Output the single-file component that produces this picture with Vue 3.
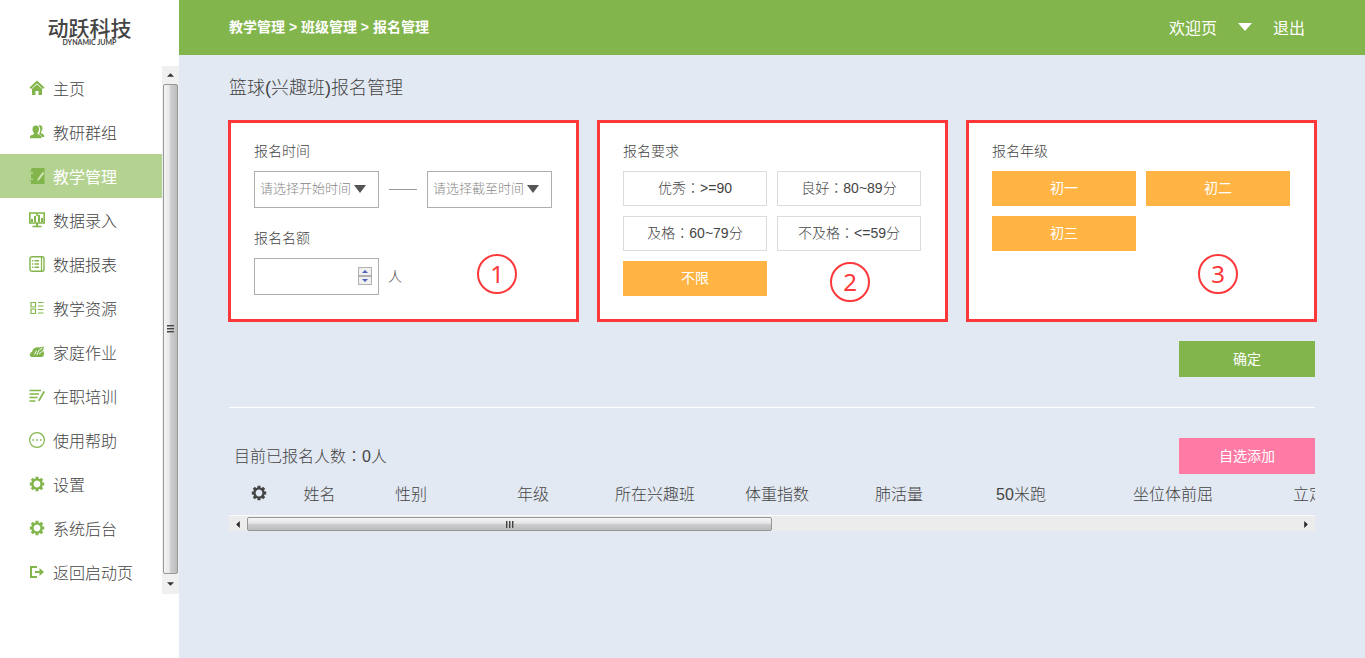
<script setup>
import { ref } from 'vue'

const menu = [
  { name: '主页', icon: 'home' },
  { name: '教研群组', icon: 'group' },
  { name: '教学管理', icon: 'notebook', active: true },
  { name: '数据录入', icon: 'monitor' },
  { name: '数据报表', icon: 'report' },
  { name: '教学资源', icon: 'resource' },
  { name: '家庭作业', icon: 'cloud' },
  { name: '在职培训', icon: 'training' },
  { name: '使用帮助', icon: 'help' },
  { name: '设置', icon: 'gear' },
  { name: '系统后台', icon: 'gear' },
  { name: '返回启动页', icon: 'exit' },
]

const levels = ref([
  { name: '优秀', range: '>=90', on: false },
  { name: '良好', range: '80~89分', on: false },
  { name: '及格', range: '60~79分', on: false },
  { name: '不及格', range: '<=59分', on: false },
  { name: '不限', range: '', on: true },
])

const grades = ref([
  { name: '初一', on: true },
  { name: '初二', on: true },
  { name: '初三', on: true },
])

const columns = [
  { name: '姓名', size: 'narrow' },
  { name: '性别', size: 'normal' },
  { name: '年级', size: 'normal' },
  { name: '所在兴趣班', size: 'normal' },
  { name: '体重指数', size: 'normal' },
  { name: '肺活量', size: 'normal' },
  { name: '50米跑', size: 'normal' },
  { name: '坐位体前屈', size: 'wide' },
  { name: '立定跳远', size: 'normal' },
]

const quota = ref('')
function step(n) {
  quota.value = Math.max(0, Number(quota.value || 0) + n)
}
</script>

<template>
  <div class="page">
    <svg class="defs" aria-hidden="true">
      <symbol id="i-gear" viewBox="0 0 16 16">
        <path fill="none" stroke="currentColor" stroke-width="2.4" d="M8 3.400a4.600 4.600 0 1 1 0 9.200a4.600 4.600 0 1 1 0-9.200z" />
        <path stroke="currentColor" stroke-width="3" d="M8 .8v2.400M8 12.800v2.400M.8 8h2.400M12.800 8h2.400M2.800 2.800l1.800 1.800M11.400 11.400l1.800 1.800M2.800 13.200l1.800-1.800M11.400 4.600l1.800-1.800" />
      </symbol>
      <symbol id="i-home" viewBox="0 0 16 16">
        <path fill="none" stroke="currentColor" stroke-width="2.200" d="M1.200 8.200L8 2l6.800 6.200" />
        <path fill="currentColor" d="M3 8.800L8 4.500l5 4.300V15H9.500v-4h-3v4H3z" />
      </symbol>
      <symbol id="i-group" viewBox="0 0 16 16">
        <path fill="currentColor" d="M9.500 1.500c3-.8 4.600 1.400 3.800 4.300-.3 1-.8 1.700-1.300 2.200l.2 1.200 2.500 1.500c.5.500.6 1.500.5 2.300h-2.400c-.3-1.500-1.300-2-2.900-2.900 1.900-2.500 2-6.400-.4-8.600z" />
        <path fill="currentColor" d="M6.800 1.500c2.300 0 3.400 1.700 3.200 3.900-.1 1.600-.7 2.700-1.500 3.500v1c1.500.8 3.500 1.200 3.900 2.500.2.700.1 1.300 0 1.900H1c-.1-.8-.2-1.400.1-2 .5-1.200 2.600-1.500 3.900-2.300V9C4.200 8.200 3.600 7 3.500 5.400 3.400 3.100 4.600 1.500 6.800 1.500z" />
      </symbol>
      <symbol id="i-notebook" viewBox="0 0 16 16">
        <path fill="currentColor" d="M3 0h12.500v16H2v-3H.5v-1.500H4v-1H2V6h2V5H.5V3.500H2V1z" />
        <path class="cut" d="M0 4.300h4M0 11.700h4" />
        <path class="pen" d="M14.500 4.500L9 12" />
        <path class="cut" d="M9.500 11l-1 2.500" />
      </symbol>
      <symbol id="i-monitor" viewBox="0 0 16 16">
        <path fill="none" stroke="currentColor" stroke-width="1.600" d="M.8 1h14.400v10H.8zM8 1v3" />
        <path stroke="currentColor" stroke-width="2" d="M3 10V7M6 10V4M10 10V3M13 10V6M8 11v3" />
        <path stroke="currentColor" stroke-width="1.600" d="M3.500 14.500h9" />
      </symbol>
      <symbol id="i-report" viewBox="0 0 16 16">
        <rect x="1" y=".7" width="14" height="14.600" rx="2" fill="none" stroke="currentColor" stroke-width="1.400" />
        <path stroke="currentColor" stroke-width="1.200" d="M12.500 1v14" />
        <path stroke="currentColor" stroke-width="1.600" d="M3 4.800h1.300M5.500 4.800H10M3 8h1.300M5.500 8H10M3 11.200h1.300M5.500 11.200H10" />
      </symbol>
      <symbol id="i-resource" viewBox="0 0 16 16">
        <path fill="none" stroke="currentColor" stroke-width="1.200" d="M2 2.500h4.500v4.500H2zM2 9h4.500v4.500H2zM9 2.500h5.500M9 6h5.500M9 9.500h5.500M9 13h5.500" />
      </symbol>
      <symbol id="i-cloud" viewBox="0 0 16 16">
        <path fill="currentColor" d="M3.600 13C-.2 13 .2 8.500 3 8c.6-3.400 4-5.500 7.400-4.500L15 2.500 14 6.500c1.500 2 1.500 6.500-1.500 6.500z" />
        <path class="white" d="M5.500 10.500l2-4M8 10.800c.5-3 2.500-5.300 5.200-6.800M10 9.500c1.500-.3 3-1.500 3.500-3" />
      </symbol>
      <symbol id="i-training" viewBox="0 0 16 16">
        <path stroke="currentColor" stroke-width="1.600" d="M.5 2.500H12M.5 6H10M.5 9.500h8M.5 13h6" />
        <path fill="currentColor" d="M14.500 3l1.500.7-4.800 8.500-2 1.500.5-2.500z" />
      </symbol>
      <symbol id="i-help" viewBox="0 0 16 16">
        <circle cx="8" cy="8" r="7.400" fill="none" stroke="currentColor" stroke-width="1.200" />
        <path stroke="currentColor" stroke-width="1.600" d="M3.500 8H5M7.200 8h1.600M11 8h1.500" />
      </symbol>
      <symbol id="i-exit" viewBox="0 0 16 16">
        <path fill="none" stroke="currentColor" stroke-width="2" d="M8 3H2v10h6" />
        <path fill="currentColor" d="M6 7h4.500V4L15 8l-4.500 4V9H6z" />
      </symbol>
    </svg>

    <aside class="sidebar">
      <div class="logo">
        <span class="logo-name">动跃科技</span>
        <span class="logo-sub">DYNAMIC JUMP</span>
      </div>
      <div class="side-body">
        <nav class="menu">
          <a v-for="m in menu" :key="m.name" href="#" class="item" :class="{ active: m.active }">
            <svg class="icon" aria-hidden="true"><use :href="'#i-' + m.icon" /></svg>
            <span>{{ m.name }}</span>
          </a>
        </nav>
        <div class="vbar" aria-hidden="true">
          <span class="vend"><svg viewBox="0 0 8 4"><path d="M0 4l4-4 4 4z" /></svg></span>
          <span class="vthumb"><i></i><i></i><i></i></span>
          <span class="vend"><svg viewBox="0 0 8 4"><path d="M0 0l4 4 4-4z" /></svg></span>
        </div>
      </div>
    </aside>

    <div class="main">
      <header class="top">
        <nav class="crumbs">
          <a href="#">教学管理</a> &gt; <a href="#">班级管理</a> &gt; <a href="#">报名管理</a>
        </nav>
        <div class="user">
          <button type="button" class="welcome">
            欢迎页
            <svg viewBox="0 0 14 8" aria-hidden="true"><path d="M0 0h14L7 8z" /></svg>
          </button>
          <a href="#">退出</a>
        </div>
      </header>

      <main class="content">
        <h1>篮球(兴趣班)报名管理</h1>

        <div class="panels">
          <section class="panel">
            <h2>报名时间</h2>
            <div class="range">
              <div class="picker">
                <select aria-label="开始时间"><option>请选择开始时间</option></select>
                <svg viewBox="0 0 12 8" aria-hidden="true"><path d="M0 0h12L6 8z" /></svg>
              </div>
              <span class="dash"></span>
              <div class="picker">
                <select aria-label="截至时间"><option>请选择截至时间</option></select>
                <svg viewBox="0 0 12 8" aria-hidden="true"><path d="M0 0h12L6 8z" /></svg>
              </div>
            </div>
            <h2><label for="quota">报名名额</label></h2>
            <div class="quota">
              <div class="picker">
                <input id="quota" v-model="quota" type="number" min="0" />
                <span class="spin">
                  <button type="button" aria-label="增加" @click="step(1)"><svg viewBox="0 0 6 3"><path d="M0 3l3-3 3 3z" /></svg></button>
                  <button type="button" aria-label="减少" @click="step(-1)"><svg viewBox="0 0 6 3"><path d="M0 0l3 3 3-3z" /></svg></button>
                </span>
              </div>
              <span class="unit">人</span>
            </div>
            <span class="mark first">1</span>
          </section>

          <section class="panel">
            <h2>报名要求</h2>
            <div class="options">
              <button v-for="l in levels" :key="l.name" type="button" class="option" :class="{ on: l.on }" @click="l.on = !l.on">
                {{ l.name }}<template v-if="l.range"><span class="colon">：</span>{{ l.range }}</template>
              </button>
            </div>
            <span class="mark second">2</span>
          </section>

          <section class="panel">
            <h2>报名年级</h2>
            <div class="options">
              <button v-for="g in grades" :key="g.name" type="button" class="option" :class="{ on: g.on }" @click="g.on = !g.on">{{ g.name }}</button>
            </div>
            <span class="mark third">3</span>
          </section>
        </div>

        <div class="confirm">
          <button type="button" class="action">确定</button>
        </div>

        <div class="summary">
          <span>目前已报名人数<span class="colon">：</span>0人</span>
          <button type="button" class="action pink">自选添加</button>
        </div>

        <div class="sheet">
          <table>
            <thead>
              <tr>
                <th class="tool"><svg class="icon" role="img" aria-label="列设置"><use href="#i-gear" /></svg></th>
                <th v-for="c in columns" :key="c.name" :class="c.size">{{ c.name }}</th>
              </tr>
            </thead>
          </table>
        </div>
        <div class="hbar" aria-hidden="true">
          <span class="hend"><svg viewBox="0 0 4 8"><path d="M4 0L0 4l4 4z" /></svg></span>
          <span class="htrack"><span class="hthumb"><i></i><i></i><i></i></span></span>
          <span class="hend"><svg viewBox="0 0 4 8"><path d="M0 0l4 4-4 4z" /></svg></span>
        </div>
      </main>
    </div>
  </div>
</template>

<style>
body {
  background: #e2e9f2;
}
</style>

<style scoped>
.page {
  display: flex;
  min-height: 100vh;
  font-family: "Liberation Sans", "Noto Sans CJK SC", sans-serif;
  font-size: 16px;
  font-weight: 300;
  color: #444;
  background: #e2e9f2;
}
.page * {
  box-sizing: border-box;
}
button, input, select {
  font: inherit;
  color: inherit;
  border-radius: 0;
}
button {
  padding: 0;
  border: 0;
  cursor: pointer;
}
a {
  color: inherit;
  text-decoration: none;
}
svg {
  display: block;
  fill: currentColor;
}
.defs {
  position: absolute;
  width: 0;
  height: 0;
}
.colon {
  font-family: "Noto Sans CJK TC", sans-serif;
}
.icon {
  width: 16px;
  height: 16px;
}

.sidebar {
  flex: none;
  width: 179px;
  background: #fff;
}
.logo {
  height: 66px;
  padding-top: 19px;
  display: flex;
  flex-direction: column;
  align-items: center;
  color: #444;
}
.logo-name {
  font-size: 21px;
  line-height: 19px;
  font-weight: 500;
}
.logo-sub {
  font-family: Lato, sans-serif;
  font-size: 7px;
  line-height: 8px;
  font-weight: 700;
}
.side-body {
  display: flex;
}
.menu {
  flex: 1;
}
.item {
  display: flex;
  align-items: center;
  gap: 8px;
  height: 44px;
  padding-left: 29px;
}
.item .icon {
  color: #82b54b;
  margin-bottom: 1px;
}
.item span {
  padding-top: 4px;
  line-height: 24px;
}
.item.active {
  background: #b4d391;
  color: #fff;
  font-weight: 400;
}
.cut {
  stroke: #b4d391;
  stroke-width: 1;
}
.pen {
  stroke: #d5e7bf;
  stroke-width: 2;
}
.white {
  fill: none;
  stroke: #fff;
  stroke-width: 1;
}
.vbar {
  width: 17px;
  padding: 0 1px;
  display: flex;
  flex-direction: column;
  background: #f0f0f0;
  color: #333;
}
.vend {
  height: 18px;
  display: flex;
  align-items: center;
  justify-content: center;
}
.vend:last-child {
  height: 20px;
}
.vend svg {
  width: 7px;
  height: 4px;
}
.vthumb {
  flex: 1;
  display: flex;
  flex-direction: column;
  align-items: center;
  justify-content: center;
  gap: 1px;
  border: 1px solid #979797;
  border-radius: 2px;
  background: linear-gradient(to right, #f5f5f5, #e4e4e6 45%, #cfcfd2 50%, #bcbcbf);
}
.vthumb i {
  width: 7px;
  height: 2px;
  border-top: 1px solid #444;
  background: #999;
}

.main {
  flex: 1;
  min-width: 0;
}
.top {
  height: 55px;
  padding: 0 60px 2px 50px;
  display: flex;
  align-items: center;
  justify-content: space-between;
  background: #82b54b;
  color: #fff;
}
.crumbs {
  padding-bottom: 2px;
  font-size: 14px;
  font-weight: 700;
}
.user {
  display: flex;
  align-items: center;
  gap: 21px;
  font-weight: 400;
}
.welcome {
  display: flex;
  align-items: center;
  gap: 21px;
  background: none;
}
.welcome svg {
  width: 14px;
  height: 8px;
}

.content {
  padding: 19px 50px;
}
h1 {
  margin: 0 0 17px;
  font-size: 18px;
  line-height: 29px;
  font-weight: 300;
}
.panels {
  display: grid;
  grid-template-columns: repeat(3, 1fr);
  gap: 18px;
  margin: 0 -2px 0 -1px;
}
.panel {
  position: relative;
  min-height: 202px;
  padding: 18px 23px;
  border: 3px solid #fd383a;
  background: #fff;
  font-size: 14px;
}
h2 {
  margin: 0 0 10px;
  font-size: 14px;
  line-height: 20px;
  font-weight: 300;
}
.range {
  display: flex;
  align-items: center;
  gap: 10px;
  margin-bottom: 20px;
}
.picker {
  position: relative;
  width: 125px;
  height: 37px;
}
.picker > svg {
  position: absolute;
  right: 13px;
  top: 14px;
  width: 12px;
  height: 8px;
  color: #555;
  pointer-events: none;
}
select, input {
  display: block;
  width: 100%;
  height: 100%;
  padding: 0 5px 2px;
  border: 1px solid #aeaeae;
  background: #fff;
  appearance: none;
}
select {
  font-size: 13px;
  color: #888;
}
input {
  appearance: textfield;
}
input::-webkit-inner-spin-button {
  appearance: none;
}
.dash {
  width: 28px;
  height: 1px;
  background: #999;
}
.quota {
  display: flex;
  align-items: center;
  gap: 9px;
}
.unit {
  padding-bottom: 4px;
}
.spin {
  position: absolute;
  right: 7px;
  top: 9px;
  width: 14px;
  height: 18px;
  display: flex;
  flex-direction: column;
}
.spin button {
  flex: 1;
  display: flex;
  align-items: center;
  justify-content: center;
  border: 1px solid #b0b0b0;
  background: #f0f0f0;
  color: #4a62b5;
}
.spin svg {
  width: 6px;
  height: 3px;
}
.options {
  display: grid;
  grid-template-columns: 144px 144px;
  gap: 10px;
}
.option {
  height: 35px;
  padding-bottom: 3px;
  border: 1px solid #dcdcdc;
  background: #fff;
}
.option.on {
  border-color: #ffb443;
  background: #ffb443;
  color: #fff;
  font-weight: 400;
}
.mark {
  position: absolute;
  width: 40px;
  height: 40px;
  border: 2px solid #fd383a;
  border-radius: 50%;
  font-family: "Noto Sans", sans-serif;
  font-size: 24px;
  font-weight: 400;
  line-height: 36px;
  text-align: center;
  color: #fd383a;
}
.first {
  left: 246px;
  top: 131px;
}
.second {
  left: 230px;
  top: 139px;
}
.third {
  left: 229px;
  top: 131px;
}

.confirm {
  display: flex;
  justify-content: flex-end;
  padding: 19px 0 30px;
  border-bottom: 1px solid #fff;
}
.action {
  width: 136px;
  height: 36px;
  padding-bottom: 2px;
  background: #82b54b;
  color: #fff;
  font-size: 14px;
  font-weight: 400;
}
.pink {
  background: #ff7ba5;
}
.summary {
  display: flex;
  align-items: center;
  justify-content: space-between;
  padding: 30px 0 0 5px;
}
.summary > span {
  padding-bottom: 2px;
}
.sheet {
  overflow: hidden;
}
table {
  table-layout: fixed;
  width: 1157px;
  border-collapse: collapse;
}
th {
  height: 41px;
  padding: 0 0 3px;
  font-weight: 300;
  text-align: center;
  white-space: nowrap;
}
.tool {
  width: 60px;
}
.tool .icon {
  margin: 0 auto;
}
.narrow {
  width: 61px;
}
.normal {
  width: 122px;
}
.wide {
  width: 182px;
}
.hbar {
  display: flex;
  height: 16px;
  padding-top: 1px;
  border-top: 1px solid #fafafa;
  background: #ececec;
  color: #222;
}
.hend {
  width: 18px;
  display: flex;
  align-items: center;
  justify-content: center;
}
.hend svg {
  width: 4px;
  height: 7px;
}
.htrack {
  flex: 1;
  display: flex;
}
.hthumb {
  width: 50%;
  display: flex;
  align-items: center;
  justify-content: center;
  gap: 1px;
  border: 1px solid #979797;
  border-radius: 2px;
  background: linear-gradient(#f5f5f5, #e4e4e6 45%, #cfcfd2 50%, #bcbcbf);
}
.hthumb i {
  width: 2px;
  height: 7px;
  border-left: 1px solid #444;
  background: #999;
}
</style>
